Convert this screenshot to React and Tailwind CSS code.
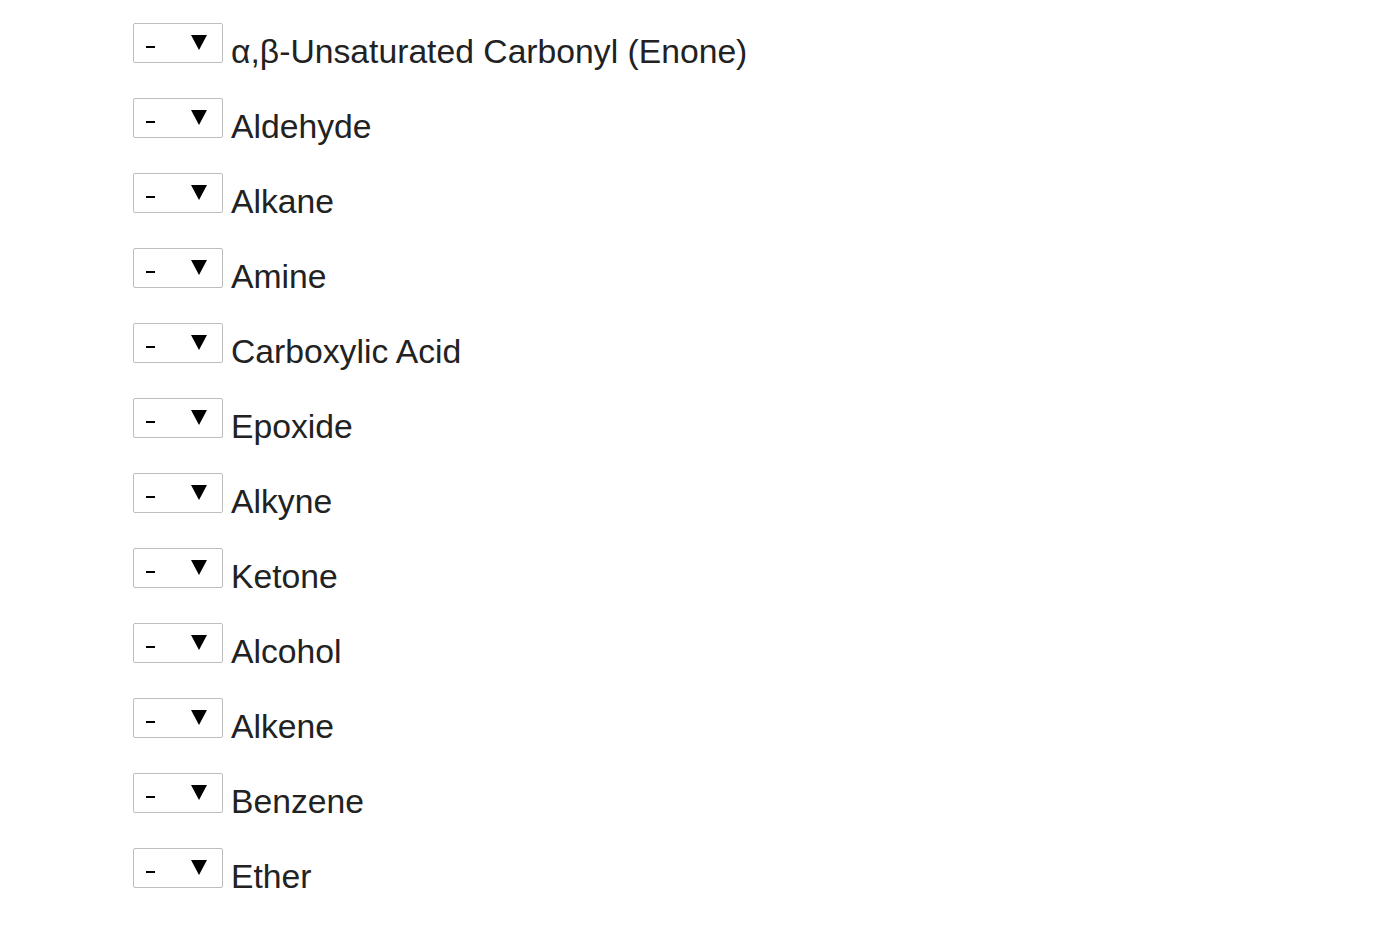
const GROUPS = [
  'α,β-Unsaturated Carbonyl (Enone)',
  'Aldehyde',
  'Alkane',
  'Amine',
  'Carboxylic Acid',
  'Epoxide',
  'Alkyne',
  'Ketone',
  'Alcohol',
  'Alkene',
  'Benzene',
  'Ether',
];

function Picker() {
  return (
    <div className="relative w-[90px] h-[40px] shrink-0 border border-[#bdbdbd] bg-white rounded-[2px]">
      <span className="absolute left-[12px] top-[22px] w-[9px] h-[2px] bg-black" />
      <svg className="absolute left-[56px] top-[10px]" width="18" height="17" viewBox="0 0 18 17">
        <path d="M1 1 H17 L9 16 Z" fill="#000" />
      </svg>
    </div>
  );
}

export default function App() {
  return (
    <div className="min-h-screen bg-white pt-[23px] pl-[133px] font-['Liberation_Sans',Arial,sans-serif]">
      {GROUPS.map((name) => (
        <div key={name} className="flex items-start h-[75px]">
          <Picker />
          <span className="ml-[8px] mt-[12px] text-[33.7px] leading-none text-[#222]">{name}</span>
        </div>
      ))}
    </div>
  );
}
